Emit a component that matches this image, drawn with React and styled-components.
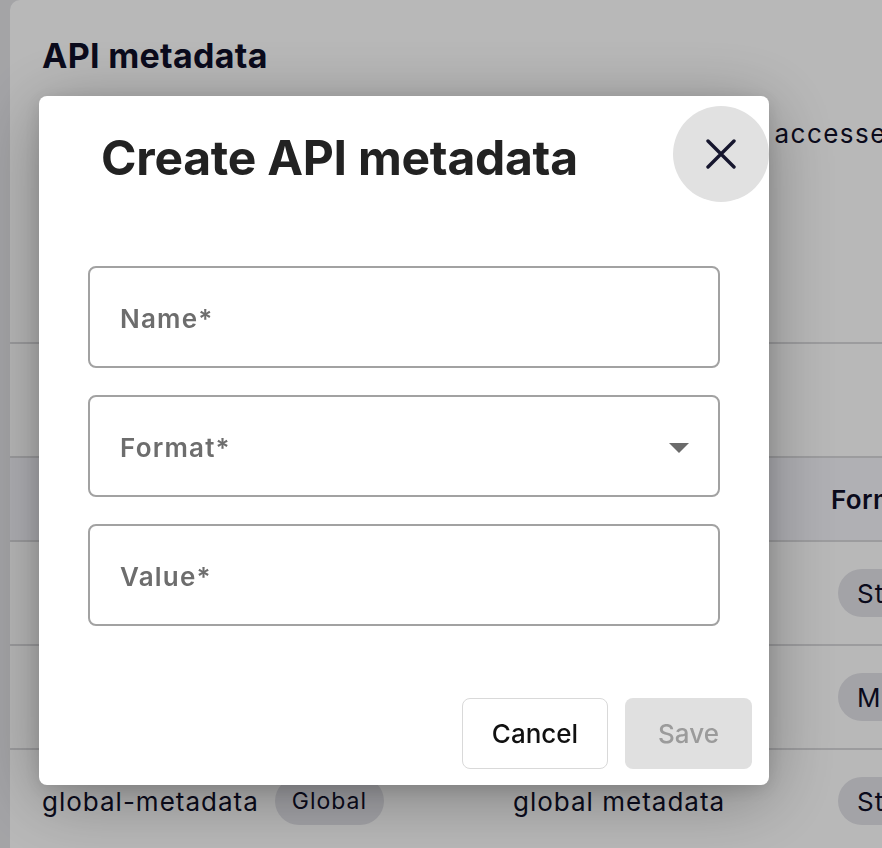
import React from 'react';
import styled, { createGlobalStyle } from 'styled-components';

const GlobalStyle = createGlobalStyle`
  html, body {
    margin: 0;
    height: 100%;
    overflow: hidden;
    background: #e3e3e7;
    font-family: Inter, "Noto Sans", sans-serif;
  }
`;

const ink = '#0f0f28';
const line = '#d9d9dc';

const Page = styled.div`
  padding: 0 0 0 10px;
  height: 848px;
`;

const Card = styled.main`
  background: #fff;
  border-top-left-radius: 10px;
  height: 100%;
  overflow: hidden;
  color: ${ink};
`;

const Intro = styled.section`
  padding: 35px 0 0 32px;
  height: 342px;
  box-sizing: border-box;
`;

const Heading = styled.h1`
  margin: 0;
  font-size: 34px;
  font-weight: 700;
  letter-spacing: 0.3px;
`;

const Lead = styled.p`
  margin: 38px 0 0;
  font-size: 26px;
  line-height: 39px;
  letter-spacing: 1.45px;
  white-space: nowrap;
`;

const Toolbar = styled.div`
  height: 114px;
  border-top: 2px solid ${line};
  box-sizing: border-box;
`;

const Row = styled.div`
  display: grid;
  grid-template-columns: 471px 325px 1fr;
  align-items: center;
  height: ${p => (p.$head ? '84px' : '104px')};
  padding-left: 32px;
  border-top: 2px solid ${line};
  box-sizing: border-box;
  background: ${p => (p.$head ? '#f4f4fa' : '#fff')};
  font-size: 26px;
  letter-spacing: 1px;
  white-space: nowrap;
`;

const HeadCell = styled.div`
  font-weight: 600;
  letter-spacing: 0.4px;
  margin-left: ${p => p.$shift || 0}px;
`;

const Cell = styled.div`
  display: flex;
  align-items: center;
  gap: 16px;
`;

const Chip = styled.span`
  display: inline-flex;
  align-items: center;
  height: 48px;
  padding: 0 ${p => (p.$small ? 17 : 19)}px;
  border-radius: 24px;
  background: #e2e2e8;
  font-size: ${p => (p.$small ? '23px' : '26px')};
`;

const Overlay = styled.div`
  position: fixed;
  inset: 0;
  background: rgba(0, 0, 0, 0.28);
  display: flex;
  align-items: flex-start;
  padding: 96px 0 0 39px;
`;

const Modal = styled.div`
  width: 730px;
  height: 689px;
  box-sizing: border-box;
  background: #fff;
  border-radius: 8px;
  box-shadow: 0 12px 70px rgba(0, 0, 0, 0.32), 0 4px 18px rgba(0, 0, 0, 0.12);
  padding: 10px 0 16px;
  display: flex;
  flex-direction: column;
`;

const Header = styled.div`
  display: flex;
  align-items: center;
  justify-content: space-between;
  padding-left: 62px;
`;

const Title = styled.h2`
  margin: 6px 0 0;
  font-size: 48px;
  font-weight: 700;
  color: #222;
  letter-spacing: -0.25px;
`;

const CloseButton = styled.button`
  width: 96px;
  height: 96px;
  border: 0;
  border-radius: 50%;
  background: #e1e1e1;
  display: flex;
  align-items: center;
  justify-content: center;
  padding: 0;
  cursor: pointer;
`;

const Fields = styled.div`
  display: flex;
  flex-direction: column;
  gap: 27px;
  padding: 0 49px;
  margin-top: 64px;
`;

const Field = styled.div`
  height: 102px;
  box-sizing: border-box;
  border: 2px solid #a2a2a2;
  border-radius: 8px;
  display: flex;
  align-items: center;
  justify-content: space-between;
  padding: 3px 29px 0 30px;
`;

const Label = styled.span`
  font-size: 26px;
  font-weight: 600;
  letter-spacing: 1.2px;
  color: #6d6d6d;
`;

const Caret = styled.span`
  width: 0;
  height: 0;
  border-left: 10px solid transparent;
  border-right: 10px solid transparent;
  border-top: 10px solid #6b6b6b;
`;

const Footer = styled.div`
  margin-top: auto;
  display: flex;
  justify-content: flex-end;
  gap: 17px;
  padding-right: 17px;
`;

const Button = styled.button`
  height: 71px;
  width: ${p => p.$w}px;
  border-radius: 8px;
  font-family: inherit;
  font-size: 26px;
  font-weight: 500;
  border: ${p => (p.$primary ? '0' : '1.5px solid #d9d9d9')};
  background: ${p => (p.$primary ? '#e0e0e0' : '#fff')};
  color: ${p => (p.$primary ? '#9b9b9b' : '#111')};
`;

const CloseIcon = () => (
  <svg width="30" height="30" viewBox="0 0 30 30" fill="none">
    <path d="M2 2L28 28M28 2L2 28" stroke="#16162e" strokeWidth="3.4" strokeLinecap="round" />
  </svg>
);

const rows = [
  { key: 'api-key-header', name: 'Header name', format: 'String' },
  { key: 'support-contact', name: 'Support mail', format: 'Mail' },
  { key: 'global-metadata', name: 'global metadata', format: 'String', global: true },
];

const App = () => (
  <>
    <GlobalStyle />
    <Page>
      <Card>
        <Intro>
          <Heading>API metadata</Heading>
          <Lead>Create metadata here so that it can be used and also accessed from policies</Lead>
        </Intro>
        <Toolbar />
        <Row $head>
          <HeadCell>Key</HeadCell>
          <HeadCell>Name</HeadCell>
          <HeadCell $shift={-7}>Format</HeadCell>
        </Row>
        {rows.map(r => (
          <Row key={r.key}>
            <Cell>
              {r.key}
              {r.global && <Chip $small>Global</Chip>}
            </Cell>
            <Cell>{r.name}</Cell>
            <Cell>
              <Chip>{r.format}</Chip>
            </Cell>
          </Row>
        ))}
      </Card>
    </Page>
    <Overlay>
      <Modal>
        <Header>
          <Title>Create API metadata</Title>
          <CloseButton aria-label="Close">
            <CloseIcon />
          </CloseButton>
        </Header>
        <Fields>
          <Field>
            <Label>Name*</Label>
          </Field>
          <Field>
            <Label>Format*</Label>
            <Caret />
          </Field>
          <Field>
            <Label>Value*</Label>
          </Field>
        </Fields>
        <Footer>
          <Button $w={146}>Cancel</Button>
          <Button $w={127} $primary>Save</Button>
        </Footer>
      </Modal>
    </Overlay>
  </>
);

export default App;
